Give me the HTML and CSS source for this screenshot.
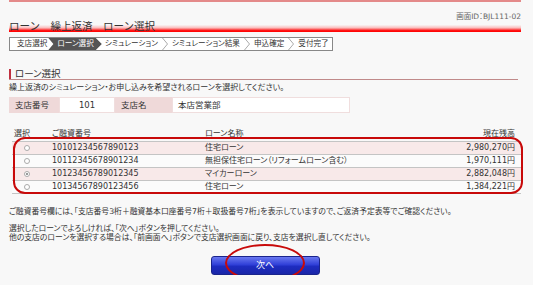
FILE: index.html
```html
<!DOCTYPE html>
<html lang="ja">
<head>
<meta charset="utf-8">
<title>ローン選択</title>
<link rel="stylesheet" href="styles.css">
</head>
<body>
<div class="page">
  <div class="topline"></div>
  <div class="screen-id">画面ID：BJL111-02</div>
  <h1 class="title">ローン　繰上返済　ローン選択</h1>
  <div class="steps">
    <span class="step first">支店選択</span>
    <span class="step active">ローン選択</span>
    <span class="step">シミュレーション</span>
    <svg class="chev" width="6" height="12" viewBox="0 0 6 12"><polyline points="0.5,0 5.5,6 0.5,12" fill="none" stroke="#aaa" stroke-width="1"/></svg>
    <span class="step">シミュレーション結果</span>
    <svg class="chev" width="6" height="12" viewBox="0 0 6 12"><polyline points="0.5,0 5.5,6 0.5,12" fill="none" stroke="#aaa" stroke-width="1"/></svg>
    <span class="step">申込確定</span>
    <svg class="chev" width="6" height="12" viewBox="0 0 6 12"><polyline points="0.5,0 5.5,6 0.5,12" fill="none" stroke="#aaa" stroke-width="1"/></svg>
    <span class="step last">受付完了</span>
  </div>

  <h2 class="section-title"><span class="bar"></span>ローン選択</h2>
  <p class="desc">繰上返済のシミュレーション・お申し込みを希望されるローンを選択してください。</p>

  <div class="branch">
    <div class="bth">支店番号</div>
    <div class="btd num">101</div>
    <div class="bth">支店名</div>
    <div class="btd name">本店営業部</div>
  </div>

  <div class="loans-wrap">
    <table class="loans">
      <thead>
        <tr>
          <th class="c-sel">選択</th>
          <th class="c-no">ご融資番号</th>
          <th class="c-name">ローン名称</th>
          <th class="c-amt">現在残高</th>
        </tr>
      </thead>
      <tbody>
        <tr class="pink">
          <td class="c-sel"><span class="radio"></span></td>
          <td class="c-no">10101234567890123</td>
          <td class="c-name">住宅ローン</td>
          <td class="c-amt">2,980,270円</td>
        </tr>
        <tr>
          <td class="c-sel"><span class="radio"></span></td>
          <td class="c-no">10112345678901234</td>
          <td class="c-name">無担保住宅ローン（リフォームローン含む）</td>
          <td class="c-amt">1,970,111円</td>
        </tr>
        <tr class="pink">
          <td class="c-sel"><span class="radio checked"></span></td>
          <td class="c-no">10123456789012345</td>
          <td class="c-name">マイカーローン</td>
          <td class="c-amt">2,882,048円</td>
        </tr>
        <tr>
          <td class="c-sel"><span class="radio"></span></td>
          <td class="c-no">10134567890123456</td>
          <td class="c-name">住宅ローン</td>
          <td class="c-amt">1,384,221円</td>
        </tr>
      </tbody>
    </table>
    <div class="mark-box"></div>
  </div>

  <p class="note">ご融資番号欄には、「支店番号3桁＋融資基本口座番号7桁＋取扱番号7桁」を表示していますので、ご返済予定表等でご確認ください。</p>
  <p class="note2">選択したローンでよろしければ、「次へ」ボタンを押してください。<br>他の支店のローンを選択する場合は、「前画面へ」ボタンで支店選択画面に戻り、支店を選択し直してください。</p>

  <div class="actions">
    <div class="btn-wrap">
      <button class="btn-next" type="button">次へ</button>
      <div class="mark-ellipse"></div>
    </div>
  </div>
</div>
</body>
</html>
```

FILE: styles.css
```css
html, body {
  margin: 0;
  padding: 0;
  background: #f8f8f8;
  overflow: hidden;
}
body {
  font-family: "DejaVu Sans", "Noto Sans CJK JP", sans-serif;
  font-size: 8px;
  color: #333;
  font-feature-settings: "palt";
}
.page {
  width: 512px;
  margin-left: 9px;
}
.topline {
  height: 2px;
  background: #e48a8a;
}
.screen-id {
  margin-top: 10px;
  text-align: right;
  font-size: 7.5px;
  line-height: 9px;
  height: 8px;
  color: #666;
}
.title {
  margin: 0;
  font-size: 10.5px;
  font-weight: normal;
  line-height: 12px;
  height: 12px;
  color: #333;
  font-feature-settings: normal;
  background: linear-gradient(to bottom, rgba(255,0,0,0) 40%, rgba(255,80,80,0.35) 65%, #ff1010 88%, #ff0000 100%);
}
.steps {
  margin-top: 5px;
  display: inline-flex;
  align-items: center;
  height: 12px;
  border: 1px solid #888;
  background: #fff;
  font-size: 7.6px;
  line-height: 12px;
  color: #333;
}
.step {
  padding: 0 3px;
  white-space: nowrap;
}
.step.first {
  padding-left: 7px;
  padding-right: 1px;
}
.step.last {
  padding-right: 3px;
}
.step.active {
  background: #555;
  color: #fff;
  padding: 0 8px 0 9px;
  clip-path: polygon(0 0, calc(100% - 6px) 0, 100% 50%, calc(100% - 6px) 100%, 0 100%, 5px 50%);
}
.chev {
  display: block;
  margin: 0 1px;
}
.section-title {
  margin: 17px 3px 0 0;
  display: flex;
  align-items: center;
  font-size: 9.5px;
  font-weight: normal;
  line-height: 11px;
  border-bottom: 1px solid #c08a8a;
  padding-bottom: 0;
}
.section-title .bar {
  width: 2px;
  height: 10px;
  background: #c03040;
  margin-right: 4px;
}
.desc {
  margin: 3px 0 0;
  line-height: 10px;
}
.branch {
  margin-top: 4px;
  display: flex;
  height: 16px;
  font-size: 8.5px;
  line-height: 16px;
}
.bth {
  width: 50px;
  background: #efd9d9;
  padding-left: 6px;
  box-sizing: border-box;
}
.btd {
  background: #fff;
  border: 1px solid #f0dede;
  box-sizing: border-box;
  line-height: 14px;
}
.btd.num {
  text-align: center;
  width: 56px;
}
.branch .bth:nth-child(3) {
  width: 57px;
}
.btd.name {
  width: 178px;
  padding-left: 5px;
}
.loans-wrap {
  position: relative;
  margin-top: 14px;
}
.loans {
  margin-left: 3px;
  width: 509px;
  border-collapse: collapse;
  table-layout: fixed;
}
.loans th {
  font-weight: normal;
  height: 14px;
  padding: 0;
  line-height: 10px;
  vertical-align: middle;
  text-align: left;
}
.loans td {
  height: 12px;
  padding: 0;
  line-height: 12px;
  border-top: 1px solid #c4c4c4;
  vertical-align: middle;
}
.loans tbody tr {
  background: #fbfbfb;
}
.loans tbody tr.pink {
  background: #f8e9e9;
}
.loans tbody tr:last-child td {
  border-bottom: 1px solid #c4c4c4;
}
.c-sel { width: 38px; }
.loans th.c-sel { padding-left: 2px; }
.loans td.c-sel { padding-left: 12px; }
.c-no { width: 153px; }
.c-amt { width: 90px; text-align: right !important; padding-right: 6px !important; }
.radio {
  display: block;
  width: 6px;
  height: 6px;
  border: 1px solid #aaa;
  border-radius: 50%;
  background: #fff;
  box-sizing: border-box;
  position: relative;
}
.radio.checked::after {
  content: "";
  position: absolute;
  left: 1px;
  top: 1px;
  width: 2px;
  height: 2px;
  border-radius: 50%;
  background: #777;
}
.mark-box {
  position: absolute;
  left: 4px;
  top: 10px;
  width: 510px;
  height: 57px;
  border: 2px solid #c80a0a;
  border-radius: 12px;
  box-sizing: border-box;
  pointer-events: none;
}
.note {
  margin: 13px 0 0;
  font-size: 7.8px;
  line-height: 10px;
}
.note2 {
  margin: 7px 0 0;
  font-size: 7.8px;
  line-height: 9px;
}
.actions {
  margin-top: 14px;
  display: flex;
  justify-content: center;
}
.btn-wrap {
  position: relative;
}
.btn-next {
  display: block;
  width: 109px;
  height: 19px;
  padding: 0;
  border: 1px solid #1a248c;
  border-radius: 3px;
  background: linear-gradient(to bottom, #6a78f0 0%, #3040d8 45%, #1e2cc0 55%, #1a26a8 100%);
  color: #fff;
  font-family: "DejaVu Sans", "Noto Sans CJK JP", sans-serif;
  font-size: 9px;
  line-height: 17px;
}
.mark-ellipse {
  position: absolute;
  left: 14px;
  top: -12px;
  width: 80px;
  height: 38px;
  border: 2px solid #c80a0a;
  border-radius: 50%;
  box-sizing: border-box;
  pointer-events: none;
}
```
